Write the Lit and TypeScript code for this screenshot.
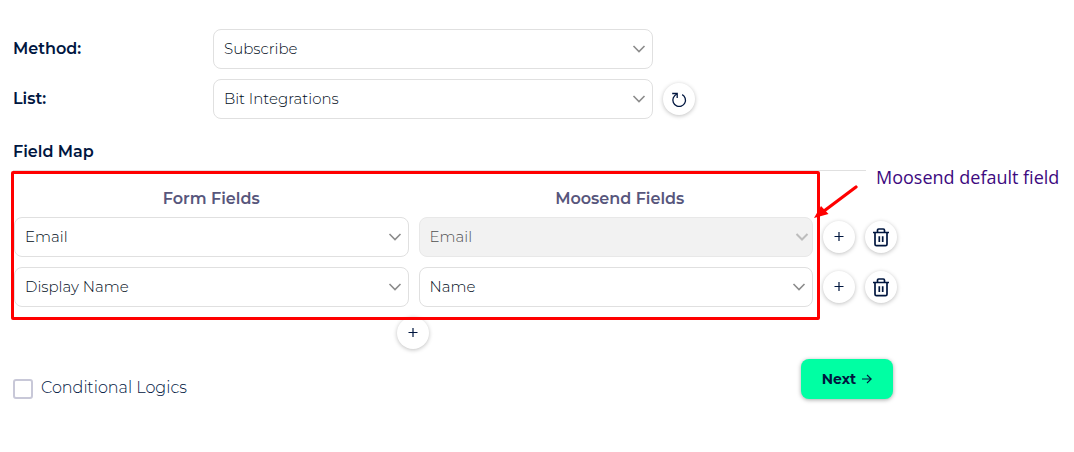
import { LitElement, html, css } from "lit";
import { customElement, property } from "lit/decorators.js";

@customElement("select-box")
class SelectBox extends LitElement {
  @property() label = "";
  @property() value = "";
  @property({ type: Boolean, reflect: true }) disabled = false;

  static styles = css`
    :host {
      display: grid;
      align-items: center;
      min-width: 0;
    }
    .control {
      grid-area: 1 / 1;
      box-sizing: border-box;
      width: 100%;
      height: 40px;
      margin: 0;
      padding: 0 32px 0 10px;
      appearance: none;
      border: 1px solid #e0e0e0;
      border-radius: 8px;
      background: #fff;
      color: #000c20;
      font: 300 15px/20px Montserrat, Inter, sans-serif;
      opacity: 1;
    }
    .control:disabled {
      border-color: #e8e8e8;
      background: #f2f2f2;
      color: #505050;
    }
    .chevron {
      grid-area: 1 / 1;
      justify-self: end;
      width: 14px;
      height: 10px;
      margin-right: 7px;
      fill: none;
      stroke: #8c8c8c;
      stroke-width: 1.6;
      pointer-events: none;
    }
    :host([disabled]) .chevron {
      margin-right: 4px;
      stroke: #bdbdbd;
      stroke-width: 2;
    }
  `;

  render() {
    return html`
      <select class="control" aria-label=${this.label} ?disabled=${this.disabled}>
        <option>${this.value}</option>
      </select>
      <svg class="chevron" viewBox="0 0 14 10" aria-hidden="true"><path d="M1.5 2 7 7.5 12.5 2" /></svg>
    `;
  }
}

@customElement("round-button")
class RoundButton extends LitElement {
  @property() icon = "plus";
  @property() label = "";

  static styles = css`
    :host {
      display: block;
      width: 32px;
      height: 32px;
    }
    .button {
      display: grid;
      place-items: center;
      width: 32px;
      height: 32px;
      padding: 0;
      border: 0;
      border-radius: 50%;
      background: #fff;
      box-shadow: 0 1px 4px rgba(0, 0, 0, 0.25);
      color: #00163f;
    }
    .icon {
      display: block;
      width: 20px;
      height: 20px;
      fill: none;
      stroke: currentColor;
    }
  `;

  private glyph() {
    if (this.icon === "trash") {
      return html`<svg class="icon" viewBox="0 0 20 20" stroke-width="1.7" stroke-linejoin="round">
        <path d="M2 5.5H18M6.5 5V3.2Q6.5 2 7.7 2H12.3Q13.5 2 13.5 3.2V5M4 5.5V17.2Q4 18.7 5.5 18.7H14.5Q16 18.7 16 17.2V5.5M8.3 9.2V15M11.7 9.2V15" />
      </svg>`;
    }
    if (this.icon === "refresh") {
      return html`<svg class="icon" viewBox="0 0 20 20" stroke-width="1.3">
        <path d="M13.2 5.6A6.3 6.3 0 1 1 4.3 8.8Q5.4 6.4 8 4.8" />
        <path d="M3.2 4.5H8.2V9" />
      </svg>`;
    }
    return html`<svg class="icon" viewBox="0 0 20 20" stroke-width="1.2">
      <path d="M5.5 9.5H14.5M10 5V14" />
    </svg>`;
  }

  render() {
    return html`<button class="button" type="button" aria-label=${this.label}>${this.glyph()}</button>`;
  }
}

@customElement("app-root")
class AppRoot extends LitElement {
  static styles = css`
    :host {
      display: block;
      padding: 29px 13px 40px;
      background: #fff;
      color: #00163f;
      font: 16px/20px Montserrat, Inter, sans-serif;
    }
    .content {
      max-width: 884px;
    }
    .settings {
      display: grid;
      grid-template-columns: 190px minmax(0, 440px) 32px;
      gap: 10px;
      align-items: center;
    }
    .name {
      grid-column: 1;
      font-weight: 600;
    }
    .title {
      margin: 23px 0 0;
      font-size: 16px;
      line-height: 20px;
      font-weight: 600;
    }
    .rule {
      height: 1px;
      margin: 8px 31px 0 0;
      border: 0;
      background: #e0e0e0;
    }
    .map {
      position: relative;
      padding: 18px 0 10px 1px;
    }
    .row {
      display: grid;
      grid-template-columns: minmax(0, 1fr) minmax(0, 1fr) 32px 32px;
      column-gap: 10px;
      align-items: center;
    }
    .row + .row {
      margin-top: 10px;
    }
    .row.heads + .row {
      margin-top: 8px;
    }
    .head {
      color: #57567c;
      font-weight: 600;
      text-align: center;
    }
    .head + .head {
      padding-left: 8px;
    }
    .frame {
      position: absolute;
      inset: 0 77px -3px -2px;
      z-index: 1;
      border: 3px solid #f00;
      border-radius: 2px;
      pointer-events: none;
    }
    .note {
      position: absolute;
      top: -5px;
      left: calc(100% - 21px);
      color: #3d0a80;
      font: 18px/22px "Open Sans", sans-serif;
      white-space: nowrap;
    }
    .arrow {
      position: absolute;
      top: 13px;
      right: 39px;
      z-index: 2;
      width: 44px;
      height: 36px;
      fill: #f00;
      stroke: #f00;
    }
    .add {
      width: max-content;
      margin-left: calc(50% - 58px);
    }
    .footer {
      display: flex;
      justify-content: space-between;
      align-items: end;
      margin: 10px 4px 0 0;
    }
    .check {
      display: flex;
      align-items: end;
      gap: 8px;
      color: #00163f;
      font-weight: 300;
      line-height: 22px;
    }
    .box {
      width: 20px;
      height: 20px;
      margin: 0;
      appearance: none;
      border: 2px solid #c8c8d8;
      border-radius: 3px;
      background: #fff;
    }
    .next {
      display: flex;
      align-items: center;
      justify-content: center;
      gap: 6px;
      width: 92px;
      height: 40px;
      padding: 0;
      border: 0;
      border-radius: 8px;
      background: #00ffa3;
      box-shadow: 0 1px 4px rgba(0, 0, 0, 0.35);
      color: #00163f;
      font: 700 14px/20px Montserrat, Inter, sans-serif;
    }
    .go {
      width: 10px;
      height: 10px;
      fill: none;
      stroke: currentColor;
      stroke-width: 1.1;
    }
  `;

  private rows = [
    { form: "Email", target: "Email", fixed: true },
    { form: "Display Name", target: "Name", fixed: false },
  ];

  render() {
    return html`
      <main class="content">
        <section class="settings">
          <span class="name">Method:</span>
          <select-box label="Method" value="Subscribe"></select-box>
          <span class="name">List:</span>
          <select-box label="List" value="Bit Integrations"></select-box>
          <round-button icon="refresh" label="Refresh lists"></round-button>
        </section>

        <h2 class="title">Field Map</h2>
        <hr class="rule" />
        <section class="map">
          <div class="row heads">
            <span class="head">Form Fields</span>
            <span class="head">Moosend Fields</span>
          </div>
          ${this.rows.map(
            (r) => html`<div class="row">
              <select-box label="Form field" .value=${r.form}></select-box>
              <select-box label="Moosend field" .value=${r.target} ?disabled=${r.fixed}></select-box>
              <round-button icon="plus" label="Add row"></round-button>
              <round-button icon="trash" label="Delete row"></round-button>
            </div>`
          )}
          <div class="frame"></div>
          <span class="note">Moosend default field</span>
          <svg class="arrow" viewBox="0 0 44 36" aria-hidden="true">
            <path d="M42 3 10 27" fill="none" stroke-width="3.2" stroke-linecap="round" />
            <path d="M0 34 7 22 14.5 30Z" stroke="none" />
          </svg>
        </section>
        <round-button class="add" icon="plus" label="Add field"></round-button>

        <footer class="footer">
          <label class="check"><input class="box" type="checkbox" />Conditional Logics</label>
          <button class="next" type="button">
            Next
            <svg class="go" viewBox="0 0 10 10" aria-hidden="true"><path d="M0 5H9M5 1 9.2 5 5 9" /></svg>
          </button>
        </footer>
      </main>
    `;
  }
}
